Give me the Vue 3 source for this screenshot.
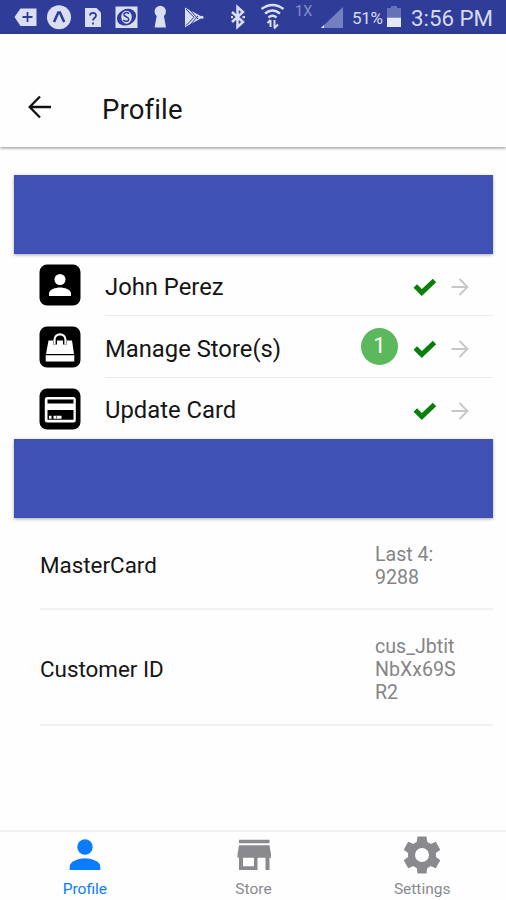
<script setup>
const items = [
  { label: 'John Perez', icon: 'person' },
  { label: 'Manage Store(s)', icon: 'bag', badge: 1 },
  { label: 'Update Card', icon: 'card' },
]
const details = [
  { label: 'MasterCard', value: 'Last 4: 9288', size: 'short' },
  { label: 'Customer ID', value: 'cus_JbtitNbXx69SR2', size: 'tall' },
]
const tabs = [
  { label: 'Profile', icon: 'person', active: true },
  { label: 'Store', icon: 'store' },
  { label: 'Settings', icon: 'gear' },
]
const teeth = [0, 60, 120, 180, 240, 300]
</script>

<template>
  <div class="screen">
    <div class="status">
      <svg class="notifications" viewBox="0 0 250 34" aria-hidden="true">
        <g fill="#d9def3">
          <path d="M14.500 17l6-8.500h16v17.500h-16z" />
          <circle cx="59" cy="17.300" r="12" />
          <path d="M85 8h11.500l4.500 4.500v14.500h-16z" />
          <path d="M115.500 6.500h22v21.500h-22z" />
          <circle cx="160.300" cy="11.500" r="5.700" />
          <path d="M157 14h6.600l2.400 13.500h-11.400z" />
          <path d="M185 7.500l18 9.800-18 9.900z" />
        </g>
        <g fill="none" stroke="#303d98" stroke-width="1.800">
          <path d="M27.500 12v10M22.500 17h10" />
          <path d="M54 22l4.300-9.500h1.600l4.300 9.500" stroke-width="2.600" />
          <path d="M90 15.500c0-3.500 6-3.500 6 0 0 2.500-3 2.500-3 5M93 22.500v2" />
          <path d="M186 9l8 8.300-8 8.200M190 10l8 9M190 25l8-9" stroke-width="1" />
        </g>
        <ellipse cx="126.500" cy="17.200" rx="10" ry="8" fill="#303d98" transform="rotate(-25 126.500 17.200)" />
        <ellipse cx="126.500" cy="17.200" rx="5.200" ry="6.500" fill="#d9def3" />
        <path d="M129 13.800c-2-2-5.500-1.300-5 1.200.5 2 4.700 1.500 4.700 4.200 0 2.500-3.700 2.800-5.500.8" fill="none" stroke="#303d98" stroke-width="1.500" />
        <circle cx="202" cy="17.300" r="1.500" fill="#d9def3" />
        <path d="M232 12l11 10-5.500 5v-20l5.500 5-11 10" fill="none" stroke="#d9def3" stroke-width="2.500" />
        <path d="M231 17.200h2M242.500 17.200h2.500" stroke="#d9def3" stroke-width="2.300" />
      </svg>
      <svg class="wifi" viewBox="0 0 26 28" aria-hidden="true">
        <g fill="none" stroke="#d9def3" stroke-width="2.400">
          <path d="M1.500 6q11-8 22 0M5 10.500q7.500-6 15 0M8.500 14.500q4-3.500 8 0" />
          <path d="M10.500 24v-7M7.500 20l3-3M14.500 17v8M14 25.500l4-4" stroke-width="2" />
        </g>
      </svg>
      <span class="network">1X</span>
      <svg class="signal" viewBox="0 0 24 24" aria-hidden="true">
        <path d="M23 1v21h-22z" fill="#7380bf" />
        <path d="M1 22l3-3v3z" fill="#e5e9fa" />
      </svg>
      <span class="percent">51%</span>
      <svg class="battery" viewBox="0 0 14 22" aria-hidden="true">
        <path d="M4 0h6v2h4v9h-14v-9h4z" fill="#6572b5" />
        <path d="M0 11.500h14v9.500h-14z" fill="#e5e9fa" />
      </svg>
      <span class="clock">3:56 PM</span>
    </div>

    <header class="header">
      <svg class="back" viewBox="0 0 24 24" aria-hidden="true">
        <path d="M23 12H2M12 1.500L1.700 12 12 22.500" fill="none" stroke="#111" stroke-width="2.300" />
      </svg>
      <h1 class="title">Profile</h1>
    </header>

    <main class="content">
      <div class="band"></div>
      <div class="list">
        <div v-for="item in items" :key="item.label" class="item">
          <svg class="tile" viewBox="0 0 42 42" aria-hidden="true">
            <rect x=".5" y=".5" width="41" height="41" rx="7.500" fill="#000" />
            <g v-if="item.icon === 'person'" fill="#fff">
              <circle cx="21" cy="15.500" r="5.500" />
              <path d="M10 32v-2.500c0-4 6.500-6 11-6s11 2 11 6v2.500z" />
            </g>
            <g v-else-if="item.icon === 'bag'">
              <path d="M9.500 14.500h23.500l2 13.500h-28zM6.700 29.300h28.600v6.200h-28.600z" fill="#fff" />
              <path d="M16 18.500v-4.500c0-7 10-7 10 0v4.500" fill="none" stroke="#000" stroke-width="4" />
              <path d="M15.500 18.500v-4.500c0-7.500 11-7.500 11 0v4.500" fill="none" stroke="#fff" stroke-width="2.200" />
            </g>
            <g v-else>
              <rect x="5.800" y="9" width="31" height="25.500" rx="2.500" fill="#fff" />
              <path d="M8.500 11.500h26v4h-26zM8.500 22h26v9.800h-26z" fill="#000" />
              <path d="M10 27.800h2.500v3h-2.500zM14.500 27.800h8v3h-8z" fill="#fff" />
              <path d="M17.500 27.800v3" stroke="#777" />
            </g>
          </svg>
          <div class="body">
            <span class="label">{{ item.label }}</span>
            <span v-if="item.badge" class="badge">{{ item.badge }}</span>
            <svg class="check" viewBox="0 0 24 18" aria-hidden="true">
              <path d="M2.300 8l6.500 6.500L21.500 2.500" fill="none" stroke="#087f0b" stroke-width="5" />
            </svg>
            <svg class="arrow" viewBox="0 0 18 18" aria-hidden="true">
              <path d="M.5 9h15.500M8.500 1l8 8-8 8" fill="none" stroke="#c7c7c7" stroke-width="1.900" />
            </svg>
          </div>
        </div>
      </div>
      <div class="band"></div>
      <div class="details">
        <div v-for="row in details" :key="row.label" class="detail" :class="row.size">
          <span class="name">{{ row.label }}</span>
          <span class="value">{{ row.value }}</span>
        </div>
      </div>
    </main>

    <nav class="tabs">
      <div v-for="tab in tabs" :key="tab.label" class="tab" :class="{ active: tab.active }">
        <svg class="tab-icon" viewBox="0 0 46 46" fill="currentColor" aria-hidden="true">
          <g v-if="tab.icon === 'person'">
            <circle cx="23" cy="15" r="7.700" />
            <path d="M7.700 38v-3.500c0-5.200 9.300-8.200 15.300-8.200s15.300 3 15.300 8.200v3.500z" />
          </g>
          <path v-else-if="tab.icon === 'store'" fill-rule="evenodd" d="M8 7.700h30.500v3.500h-30.500zM8 13.300h30.500l1.500 9v3.500h-1.500v12.200h-4v-12.200h-8v12.200h-18.500v-12.200h-1.500v-3.500zM12 25.800v8.500h11v-8.500z" />
          <g v-else>
            <circle cx="23" cy="23" r="10.500" fill="none" stroke="currentColor" stroke-width="7" />
            <path v-for="angle in teeth" :key="angle" d="M17.500 12l1-7.500h9l1 7.500-1.500 2h-8z" :transform="`rotate(${angle} 23 23)`" />
          </g>
        </svg>
        <span>{{ tab.label }}</span>
      </div>
    </nav>
  </div>
</template>

<style>
body { margin: 0; background: #fefefe; }
</style>

<style scoped>
.screen {
  width: 506px;
  height: 900px;
  display: flex;
  flex-direction: column;
  overflow: hidden;
  background: #fefefe;
  color: #151515;
  font-family: Roboto, sans-serif;
}
svg { display: block; flex: none; }
.status {
  height: 34px;
  flex: none;
  display: flex;
  align-items: flex-start;
  background: #303d98;
  color: #d5daf0;
  line-height: 1;
}
.notifications { width: 250px; height: 34px; }
.wifi { width: 26px; height: 28px; margin: 3px 0 0 10px; }
.network { width: 18px; margin: 5px 0 0 9px; font-size: 14.500px; color: #8490ca; }
.signal { width: 24px; height: 24px; margin: 6px 0 0 7px; }
.percent { width: 32px; margin: 10px 0 0 8px; font-size: 17px; letter-spacing: -.3px; }
.battery { width: 14px; height: 22px; margin: 6px 0 0 3px; }
.clock { margin: 7px 0 0 10px; font-size: 22.300px; white-space: nowrap; }
.header {
  height: 113px;
  flex: none;
  display: flex;
  align-items: flex-start;
  background: #fefefe;
  box-shadow: 0 1px 3px rgba(0, 0, 0, .45);
}
.back { width: 24px; height: 24px; margin: 61px 0 0 28px; }
.title { margin: 60px 0 0 50px; font-size: 27.500px; line-height: 32px; font-weight: 400; letter-spacing: .15px; }
.content { flex: 1; padding: 28px 13px 0 14px; }
.band { position: relative; height: 79px; background: #3f51b5; box-shadow: 0 1px 3px rgba(0, 0, 0, .35); }
.item { height: 62px; display: flex; align-items: center; padding-left: 25px; }
.item:last-child { height: 61px; }
.tile { width: 42px; height: 42px; }
.body {
  flex: 1;
  height: 100%;
  box-sizing: border-box;
  display: flex;
  align-items: center;
  margin-left: 24px;
  padding-right: 24px;
  padding-top: 5px;
  border-bottom: 1px solid #ebebeb;
}
.item:last-child .body { border-bottom-color: transparent; }
.label { flex: 1; margin-top: -1px; font-size: 23.800px; line-height: 28px; }
.badge {
  width: 37px;
  height: 37px;
  margin: 0 15px 5px 0;
  border-radius: 50%;
  background: #5cb85c;
  color: #fff;
  text-align: center;
  font-size: 22px;
  line-height: 35px;
}
.check { width: 24px; height: 18px; margin-right: 14px; }
.arrow { width: 18px; height: 18px; }
.detail {
  box-sizing: border-box;
  display: flex;
  align-items: center;
  margin-left: 26px;
  border-bottom: 2px solid #f1f1f1;
}
.short { height: 92px; padding-top: 5px; }
.tall { height: 116px; padding-top: 4px; }
.name { flex: 1; font-size: 22.400px; line-height: 27px; }
.value { width: 84px; margin-right: 34px; overflow-wrap: anywhere; font-size: 19.600px; line-height: 23px; color: #858585; }
.tabs { flex: none; height: 70px; box-sizing: border-box; display: flex; border-top: 2px solid #f0f0f0; }
.tab { flex: 1; display: flex; flex-direction: column; align-items: center; padding-left: 1px; color: #8a8a8e; font-size: 15.500px; line-height: 18px; }
.active { color: #0a7cff; }
.tab-icon { width: 46px; height: 46px; margin-bottom: 2px; }
</style>
